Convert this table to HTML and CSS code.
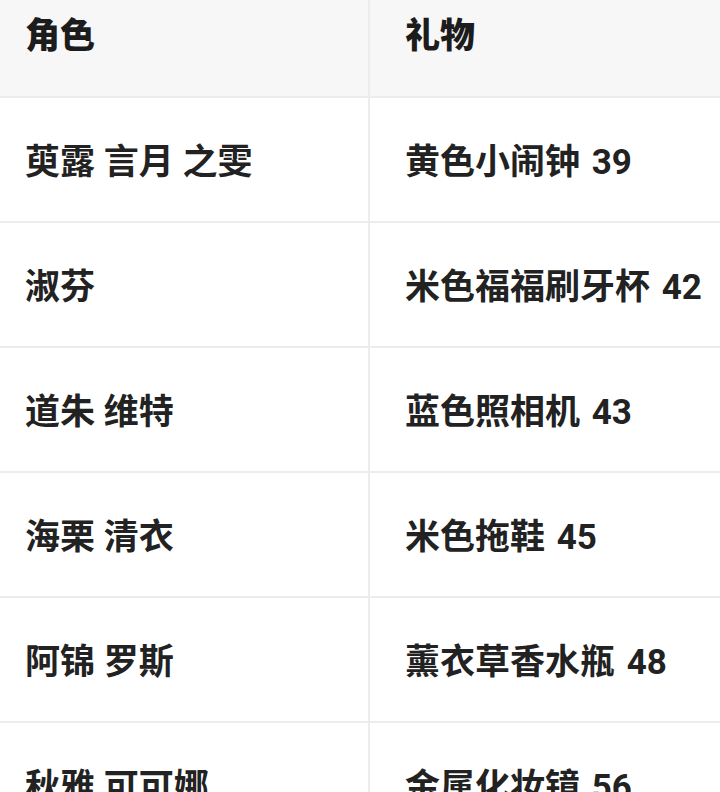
FILE: index.html
```html
<!DOCTYPE html>
<html lang="zh-CN">
<head>
<meta charset="utf-8">
<title>角色礼物</title>
<link rel="stylesheet" href="styles.css">
</head>
<body>
<div class="table">
  <div class="cell head left">角色</div>
  <div class="cell head right">礼物</div>

  <div class="cell left">萸露 言月 之雯</div>
  <div class="cell right">黄色小闹钟 39</div>

  <div class="cell left">淑芬</div>
  <div class="cell right">米色福福刷牙杯 42</div>

  <div class="cell left">道朱 维特</div>
  <div class="cell right">蓝色照相机 43</div>

  <div class="cell left">海栗 清衣</div>
  <div class="cell right">米色拖鞋 45</div>

  <div class="cell left">阿锦 罗斯</div>
  <div class="cell right">薰衣草香水瓶 48</div>

  <div class="cell left">秋雅 可可娜</div>
  <div class="cell right">金属化妆镜 56</div>
</div>
</body>
</html>
```

FILE: styles.css
```css
html, body {
  margin: 0;
  padding: 0;
  background: #ffffff;
  overflow: hidden;
}

body {
  font-family: "Roboto", "Noto Sans CJK SC", "Noto Sans", sans-serif;
  color: #222222;
}

.table {
  display: grid;
  grid-template-columns: 370px 1fr;
  width: 720px;
}

.cell {
  height: 125px;
  display: flex;
  align-items: center;
  padding-top: 6px;
  font-size: 35px;
  line-height: 50px;
  font-weight: 700;
  white-space: nowrap;
  border-bottom: 2px solid #ececec;
  box-sizing: border-box;
}

.left {
  padding-left: 25px;
  border-right: 2px solid #ececec;
}

.right {
  padding-left: 35px;
  word-spacing: 3px;
}

.head {
  height: 98px;
  align-items: flex-start;
  padding-top: 12px;
  background: #f7f7f7;
  font-weight: 900;
  color: #1c1c1c;
}
```
